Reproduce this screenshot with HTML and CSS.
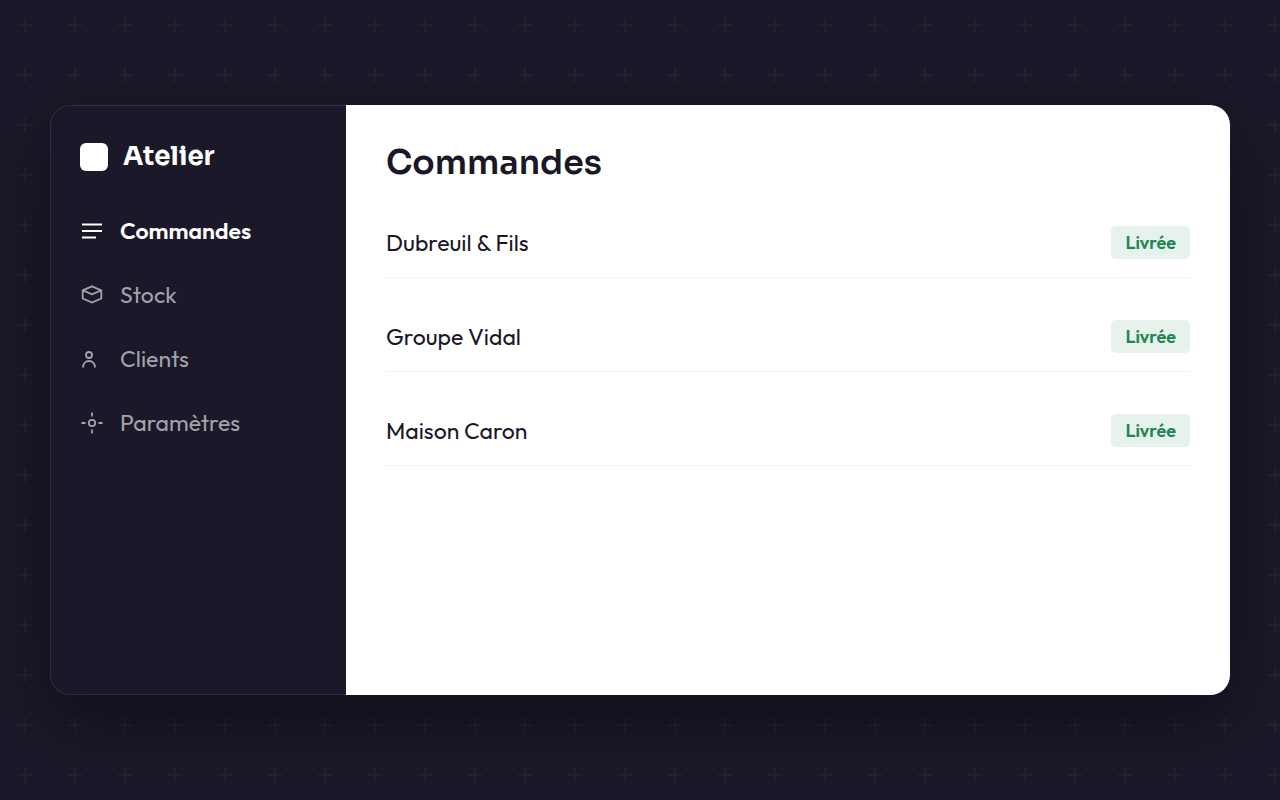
FILE: index.html
```html
<!DOCTYPE html>
<html lang="fr">

<head>
    <meta charset="UTF-8">
    <meta name="viewport" content="width=device-width, initial-scale=1">
    <title>Atelier</title>
    <link rel="stylesheet" href="styles.css">
</head>

<body>
    <div class="window">
        <aside class="sidebar">
            <div class="brand">
                <span class="brand-mark"></span>
                <span class="brand-name">Atelier</span>
            </div>
            <nav class="menu">
                <a class="menu-item active" href="#commandes">
                    <svg class="icon" viewBox="0 0 24 24"><path d="M2 5.500h20M2 12h20M2 18.500h14"/></svg>
                    Commandes
                </a>
                <a class="menu-item" href="#stock">
                    <svg class="icon" viewBox="0 0 24 24"><path d="M12 3.300l9.300 4v8.200L12 19.600l-9.300-4.100V7.300zM2.700 7.300l9.300 4 9.300-4"/></svg>
                    Stock
                </a>
                <a class="menu-item" href="#clients">
                    <svg class="icon" viewBox="0 0 24 24"><circle cx="9" cy="8" r="3"/><path d="M3 20.500c0-4 2.500-6.500 6-6.500s6 2.500 6 6.500"/></svg>
                    Clients
                </a>
                <a class="menu-item" href="#parametres">
                    <svg class="icon" viewBox="0 0 24 24"><circle cx="12" cy="12" r="3.200"/><path d="M12 1.500v4M12 18.500v4M1.500 12h4M18.500 12h4"/></svg>
                    Paramètres
                </a>
            </nav>
        </aside>

        <main class="content">
            <h1>Commandes</h1>
            <ul class="orders">
                <li class="order">
                    <span class="order-name">Dubreuil &amp; Fils</span>
                    <span class="badge">Livrée</span>
                </li>
                <li class="order">
                    <span class="order-name">Groupe Vidal</span>
                    <span class="badge">Livrée</span>
                </li>
                <li class="order">
                    <span class="order-name">Maison Caron</span>
                    <span class="badge">Livrée</span>
                </li>
            </ul>
        </main>
    </div>
</body>

</html>
```
FILE: styles.css
```css
* {
    box-sizing: border-box;
}

body {
    margin: 0;
    min-height: 100vh;
    padding: 20px 50px;
    display: flex;
    align-items: center;
    font-family: Outfit, Lato, sans-serif;
    color: #1a1828;
    background-color: #1b1829;
    /* grid of small crosses */
    background-image: url("data:image/svg+xml,%3Csvg xmlns='http://www.w3.org/2000/svg' width='50' height='50'%3E%3Cpath d='M18 25h14M25 18v14' stroke='%23fff' stroke-opacity='.04' stroke-width='2'/%3E%3C/svg%3E");
}

.window {
    width: 100%;
    aspect-ratio: 2 / 1;
    display: flex;
    border-radius: 20px;
    box-shadow: 0 25px 70px rgba(0, 0, 0, 0.4);
}

.sidebar {
    width: 296px;
    flex-shrink: 0;
    padding: 35px 29px;
    background: #1b1829;
    border: 1px solid #302d3c;
    border-right: 0;
    border-radius: 20px 0 0 20px;
}

.brand {
    display: flex;
    align-items: center;
    gap: 15px;
    margin-bottom: 42px;
}

.brand-mark {
    width: 28px;
    height: 28px;
    border-radius: 6px;
    background: #ffffff;
}

.brand-name {
    font-family: Sora, Inter, sans-serif;
    font-size: 26px;
    line-height: 32px;
    font-weight: 700;
    color: #ffffff;
}

.menu {
    display: flex;
    flex-direction: column;
    gap: 32px;
}

.menu-item {
    display: flex;
    align-items: center;
    gap: 16px;
    font-size: 23px;
    line-height: 32px;
    color: #a4a3a9;
    text-decoration: none;
}

.menu-item.active {
    color: #ffffff;
    font-weight: 600;
}

.icon {
    width: 24px;
    height: 24px;
    fill: none;
    stroke: currentColor;
    stroke-width: 1.8;
}

.content {
    flex: 1;
    padding: 38px 40px 40px;
    background: #ffffff;
    border-radius: 0 20px 20px 0;
}

h1 {
    margin: 0 0 43px;
    font-family: Sora, Inter, sans-serif;
    font-size: 33px;
    line-height: 40px;
    font-weight: 600;
}

.orders {
    list-style: none;
    margin: 0;
    padding: 0;
    display: flex;
    flex-direction: column;
    gap: 42px;
}

.order {
    display: flex;
    align-items: center;
    justify-content: space-between;
    padding-bottom: 18px;
    border-bottom: 1px solid #f2f2f3;
}

.order-name {
    font-size: 23px;
    line-height: 32px;
    font-weight: 450;
}

.badge {
    padding: 4px 14px;
    border-radius: 5px;
    background: #e6f2eb;
    color: #218553;
    font-size: 18px;
    line-height: 25px;
    font-weight: 600;
}
```
